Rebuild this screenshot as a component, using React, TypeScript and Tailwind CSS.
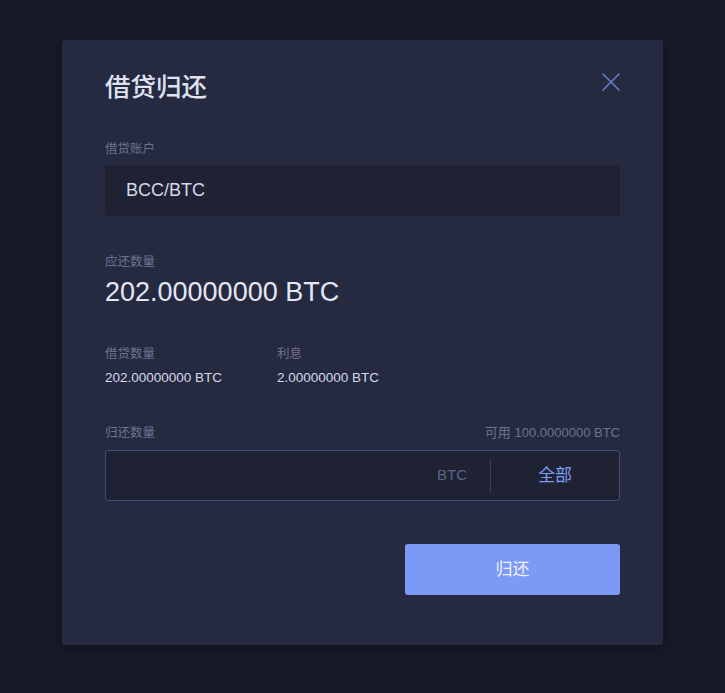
import { useState } from "react";

const font = "font-['Helvetica_Neue','Liberation_Sans','Noto_Sans_CJK_SC',sans-serif]";

function CloseIcon() {
  return (
    <svg width="20" height="20" viewBox="0 0 20 20" fill="none">
      <path d="M2 2L18 18M18 2L2 18" stroke="#6b84dc" strokeWidth="1.4" strokeLinecap="round" />
    </svg>
  );
}

export default function App() {
  const [amount, setAmount] = useState("");

  return (
    <div className={`min-h-[693px] w-full bg-[#171a28] pt-10 ${font}`}>
      <div className="ml-[62px] w-[601px] rounded-[3px] bg-[#262a40] px-[43px] pb-[50px] pt-[30px] shadow-[0_4px_16px_rgba(0,0,0,0.35)]">
        {/* Header */}
        <div className="flex items-start justify-between">
          <h2 className="text-[25.5px] leading-[34px] font-medium text-[#dfe2f3]">借贷归还</h2>
          <button className="mr-[-1px] mt-[2px]">
            <CloseIcon />
          </button>
        </div>

        {/* Account */}
        <p className="mt-[37px] text-[12.5px] leading-[16px] text-[#6d7290]">借贷账户</p>
        <div className="mt-[8px] flex h-[51px] items-center rounded-[2px] bg-[#1f2233] px-[21px] text-[18px] text-[#d4d8ea]">
          BCC/BTC
        </div>

        {/* Due */}
        <p className="mt-[38px] text-[12.5px] leading-[16px] text-[#6d7290]">应还数量</p>
        <p className="mt-[7px] text-[27px] leading-[30px] text-[#e3e6f5]">202.00000000 BTC</p>

        {/* Details */}
        <div className="mt-[39px] flex">
          <div className="w-[172px]">
            <p className="text-[12.5px] leading-[16px] text-[#6d7290]">借贷数量</p>
            <p className="mt-[8px] text-[13.5px] leading-[16px] text-[#d4d8ea]">202.00000000 BTC</p>
          </div>
          <div>
            <p className="text-[12.5px] leading-[16px] text-[#6d7290]">利息</p>
            <p className="mt-[8px] text-[13.5px] leading-[16px] text-[#d4d8ea]">2.00000000 BTC</p>
          </div>
        </div>

        {/* Repay amount */}
        <div className="mt-[39px] flex items-center justify-between leading-[16px] text-[#6d7290]">
          <span className="text-[12.5px]">归还数量</span>
          <span className="text-[13px]">可用 100.0000000 BTC</span>
        </div>
        <div className="mt-[9px] flex h-[51px] items-center rounded-[3px] border border-[#454c74] bg-[#1f2233]">
          <input
            value={amount}
            onChange={(e) => setAmount(e.target.value)}
            className="h-full min-w-0 flex-1 bg-transparent px-4 text-[15px] text-[#d4d8ea] outline-none"
          />
          <span className="pr-[23px] text-[15px] text-[#5d6384]">BTC</span>
          <div className="h-[33px] w-px bg-[#3a4062]" />
          <button className="w-[128px] text-[17px] text-[#7f9cf5]">全部</button>
        </div>

        {/* Submit */}
        <div className="mt-[43px] flex justify-end">
          <button className="h-[51px] w-[215px] rounded-[3px] bg-[#7c99f6] text-[17px] text-[#eef1ff]">
            归还
          </button>
        </div>
      </div>
    </div>
  );
}
